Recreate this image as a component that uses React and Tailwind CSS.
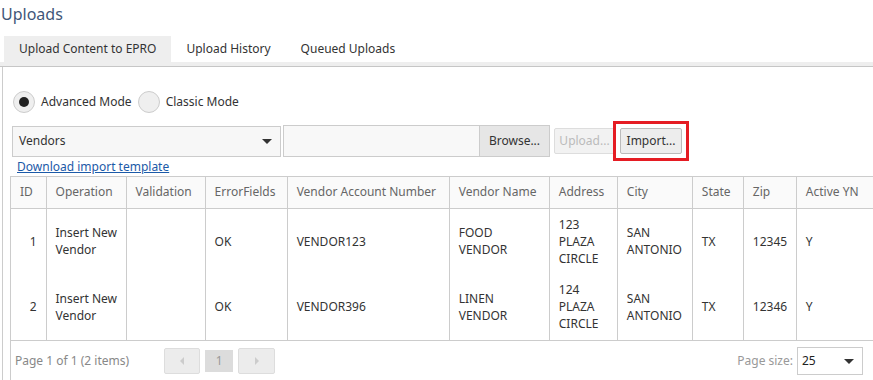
import { useState } from "react";

const COLS = [
  { key: "id", label: "ID", w: 35, right: true },
  { key: "op", label: "Operation", w: 80 },
  { key: "val", label: "Validation", w: 79 },
  { key: "err", label: "ErrorFields", w: 82 },
  { key: "acct", label: "Vendor Account Number", w: 162 },
  { key: "name", label: "Vendor Name", w: 100 },
  { key: "addr", label: "Address", w: 68 },
  { key: "city", label: "City", w: 75 },
  { key: "state", label: "State", w: 51 },
  { key: "zip", label: "Zip", w: 53, right: true },
  { key: "active", label: "Active YN", w: 77 },
];

const ROWS = [
  {
    id: 1,
    op: "Insert New\nVendor",
    val: "",
    err: "OK",
    acct: "VENDOR123",
    name: "FOOD\nVENDOR",
    addr: "123\nPLAZA\nCIRCLE",
    city: "SAN\nANTONIO",
    state: "TX",
    zip: "12345",
    active: "Y",
  },
  {
    id: 2,
    op: "Insert New\nVendor",
    val: "",
    err: "OK",
    acct: "VENDOR396",
    name: "LINEN\nVENDOR",
    addr: "124\nPLAZA\nCIRCLE",
    city: "SAN\nANTONIO",
    state: "TX",
    zip: "12346",
    active: "Y",
  },
];

function Caret() {
  return <span className="h-0 w-0 border-x-[5px] border-t-[5px] border-x-transparent border-t-[#333]" />;
}

function Radio({ checked, label }) {
  return (
    <label className="flex items-center gap-[6px]">
      <span className="flex h-[22px] w-[22px] items-center justify-center rounded-full border border-[#ccc] bg-[#efefef]">
        {checked && <span className="h-[10px] w-[10px] rounded-full bg-[#222]" />}
      </span>
      <span>{label}</span>
    </label>
  );
}

export default function App() {
  const [tab] = useState(0);
  const tabs = ["Upload Content to EPRO", "Upload History", "Queued Uploads"];

  return (
    <div className="h-[380px] w-[873px] overflow-hidden bg-white text-[12px] text-[#333]" style={{ fontFamily: '"Noto Sans", sans-serif' }}>
      <h1 className="ml-[1px] pt-[1px] text-[16px] leading-[26px] text-[#3f5779]">Uploads</h1>

      {/* tabs */}
      <div className="mt-[9px] flex pl-[4px]">
        {tabs.map((t, i) => (
          <div
            key={t}
            className={
              "flex h-[26px] items-center px-[15px] " + (i === tab ? "bg-[#eeeeee]" : "")
            }
          >
            {t}
          </div>
        ))}
      </div>
      <div className="h-[5px] border-b border-[#c6c6c6] bg-[#eeeeee]" />

      {/* panel */}
      <div className="ml-[2px] h-[320px] border-l border-[#ccc] pt-[24px]">
        <div className="flex items-center gap-[6px] pl-[10px]">
          <Radio checked label="Advanced Mode" />
          <Radio label="Classic Mode" />
        </div>

        <div className="mt-[12px] flex h-[32px] items-center pl-[9px]">
          <div className="flex h-[31px] w-[269px] items-center justify-between border border-[#ccc] bg-[#f7f7f7] pl-[6px] pr-[8px]">
            <span>Vendors</span>
            <Caret />
          </div>
          <div className="ml-[2px] flex h-[32px] w-[267px] border border-[#ccc] bg-[#f8f8f8]">
            <div className="flex-1" />
            <div className="flex w-[70px] items-center justify-center border-l border-[#ccc] bg-[#e6e6e6]">
              Browse...
            </div>
          </div>
          <div className="ml-[4px] flex h-[26px] w-[61px] items-center justify-center rounded-[2px] border border-[#ddd] bg-[#f2f2f2] text-[#bbb]">
            Upload...
          </div>
          <div className="-my-[4px] ml-[-2px] flex h-[40px] w-[76px] items-center justify-center border-[3px] border-[#e51c23]">
            <div className="flex h-[26px] w-[62px] items-center justify-center rounded-[2px] border border-[#bbb] bg-[#ededed] text-[#333]">
              Import...
            </div>
          </div>
        </div>

        <a href="#" className="ml-[14px] mt-[1px] block leading-[17px] text-[#1c5aa8] underline">
          Download import template
        </a>

        {/* grid */}
        <div className="ml-[7px] mt-[1px] border-l border-t border-[#ccc]">
          <table className="w-[863px] table-fixed border-collapse">
            <colgroup>
              {COLS.map((c) => (
                <col key={c.key} style={{ width: c.w }} />
              ))}
            </colgroup>
            <thead>
              <tr className="h-[31px] bg-[#fafafa]">
                {COLS.map((c) => (
                  <th
                    key={c.key}
                    className="border-b border-r border-[#ccc] px-[9px] text-left font-normal whitespace-nowrap text-[#666]"
                  >
                    {c.label}
                  </th>
                ))}
              </tr>
            </thead>
            <tbody>
              {ROWS.map((r, ri) => (
                <tr key={r.id} className={"h-[66px] " + (ri === ROWS.length - 1 ? "border-b border-[#ccc]" : "")}>
                  {COLS.map((c) => (
                    <td
                      key={c.key}
                      className={
                        "border-r border-[#ccc] px-[9px] align-middle leading-[17px] whitespace-pre " +
                        (c.right ? "text-right" : "text-left")
                      }
                    >
                      {r[c.key]}
                    </td>
                  ))}
                </tr>
              ))}
            </tbody>
          </table>

          {/* pager */}
          <div className="flex h-[41px] items-center pl-[4px] pr-[10px]">
            <span className="text-[#888]">Page 1 of 1 (2 items)</span>
            <div className="ml-[35px] flex items-center gap-[5px]">
              <div className="flex h-[26px] w-[36px] items-center justify-center rounded-[2px] border border-[#ddd] bg-[#ececec]">
                <span className="h-0 w-0 border-y-[4px] border-r-[4px] border-y-transparent border-r-[#ccc]" />
              </div>
              <div className="flex h-[22px] w-[28px] items-center justify-center bg-[#dcdcdc] text-[#999]">1</div>
              <div className="flex h-[26px] w-[37px] items-center justify-center rounded-[2px] border border-[#ddd] bg-[#ececec]">
                <span className="h-0 w-0 border-y-[4px] border-l-[4px] border-y-transparent border-l-[#ccc]" />
              </div>
            </div>
            <div className="ml-auto flex items-center gap-[4px]">
              <span className="text-[#999]">Page size:</span>
              <div className="flex h-[28px] w-[66px] items-center justify-between border border-[#ccc] pl-[4px] pr-[8px] text-[#222]">
                <span>25</span>
                <Caret />
              </div>
            </div>
          </div>
        </div>
      </div>
    </div>
  );
}
